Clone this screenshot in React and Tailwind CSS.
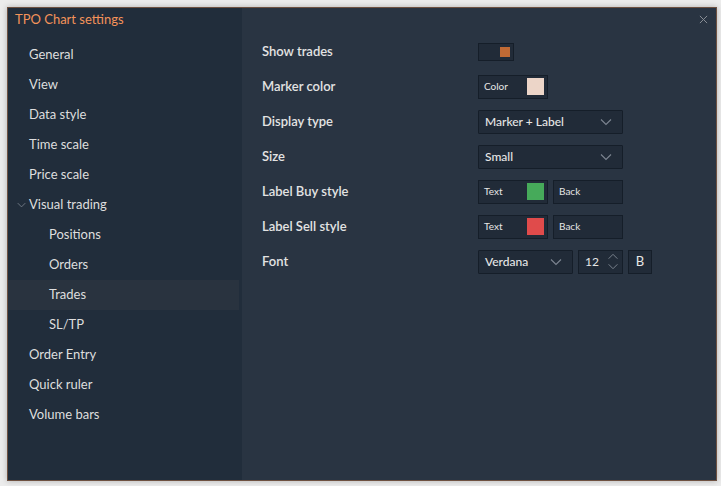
import React from 'react';

const navItems = [
  { label: 'General', level: 0 },
  { label: 'View', level: 0 },
  { label: 'Data style', level: 0 },
  { label: 'Time scale', level: 0 },
  { label: 'Price scale', level: 0 },
  { label: 'Visual trading', level: 0, open: true },
  { label: 'Positions', level: 1 },
  { label: 'Orders', level: 1 },
  { label: 'Trades', level: 1, active: true },
  { label: 'SL/TP', level: 1 },
  { label: 'Order Entry', level: 0 },
  { label: 'Quick ruler', level: 0 },
  { label: 'Volume bars', level: 0 },
];

function Chevron({ className }) {
  return (
    <svg className={className} viewBox="0 0 12 8" fill="none" stroke="currentColor" strokeWidth="1.1">
      <path d="M1 1.5l5 5 5-5" />
    </svg>
  );
}

function Select({ value, width }) {
  return (
    <div className={`${width} h-[24px] flex items-center justify-between pl-[6px] pr-[10px] bg-[#212b38] border border-[#151e29] rounded-[1px] text-[12px] font-medium text-[#e6e6e6]`}>
      <span>{value}</span>
      <Chevron className="w-[12px] h-[8px] text-[#7d8591]" />
    </div>
  );
}

function ColorBox({ label, swatch }) {
  return (
    <div className="w-[70px] h-[24px] flex items-center justify-between pl-[5px] pr-[3px] bg-[#212b38] border border-[#151e29] text-[10px] text-[#e6e6e6]">
      <span>{label}</span>
      {swatch && <span className={`w-[17px] h-[17px] ${swatch}`} />}
    </div>
  );
}

function Row({ label, children }) {
  return (
    <div className="flex items-center h-[35px]">
      <div className="w-[216px] text-[13px] font-semibold text-[#e3e3e3]">{label}</div>
      <div className="flex items-center gap-[5px]">{children}</div>
    </div>
  );
}

export default function App() {
  return (
    <div className="w-[721px] h-[486px] bg-[#ececec] p-[7px]" style={{ fontFamily: 'Lato, "Noto Sans", sans-serif' }}>
      <div className="relative w-[710px] h-[474px] flex border border-[#6e5141] shadow-[0_0_6px_rgba(0,0,0,0.25)]">
        {/* Sidebar */}
        <div className="w-[234px] bg-[#212d3b] flex flex-col">
          <div className="h-[21px] pl-[7px] flex items-end text-[13px] text-[#f4935a]">TPO Chart settings</div>
          <div className="mt-[11px] flex flex-col">
            {navItems.map((item) => (
              <div
                key={item.label}
                className={`relative h-[30px] w-[231px] flex items-center text-[13px] text-[#dedede] ${item.active ? 'bg-[#29333f]' : ''} ${item.level === 1 ? 'pl-[41px]' : 'pl-[21px]'}`}
              >
                {item.open && (
                  <Chevron className="absolute left-[9px] top-[12px] w-[9px] h-[6px] text-[#7d8591]" />
                )}
                {item.label}
              </div>
            ))}
          </div>
        </div>

        {/* Main panel */}
        <div className="flex-1 bg-[#293442] pl-[20px] pt-[26px]">
          <Row label="Show trades">
            <div className="w-[36px] h-[18px] bg-[#212b38] border border-[#151e29] flex items-center justify-end pr-[3px]">
              <span className="w-[10px] h-[10px] bg-[#c06a35]" />
            </div>
          </Row>
          <Row label="Marker color">
            <ColorBox label="Color" swatch="bg-[#ecd5c8]" />
          </Row>
          <Row label="Display type">
            <Select value="Marker + Label" width="w-[145px]" />
          </Row>
          <Row label="Size">
            <Select value="Small" width="w-[145px]" />
          </Row>
          <Row label="Label Buy style">
            <ColorBox label="Text" swatch="bg-[#46aa5a]" />
            <ColorBox label="Back" />
          </Row>
          <Row label="Label Sell style">
            <ColorBox label="Text" swatch="bg-[#e04b4b]" />
            <ColorBox label="Back" />
          </Row>
          <Row label="Font">
            <Select value="Verdana" width="w-[95px]" />
            <div className="w-[45px] h-[24px] flex items-center justify-between pl-[6px] pr-[3px] bg-[#212b38] border border-[#151e29] text-[12px] text-[#e6e6e6]">
              <span>12</span>
              <div className="flex flex-col gap-[3px]">
                <Chevron className="w-[12px] h-[7px] rotate-180 text-[#7d8591]" />
                <Chevron className="w-[12px] h-[7px] text-[#7d8591]" />
              </div>
            </div>
            <div className="w-[24px] h-[24px] flex items-center justify-center bg-[#212b38] border border-[#151e29] text-[13px] text-[#e6e6e6]">B</div>
          </Row>
        </div>

        <svg className="absolute right-[8px] top-[7px] w-[9px] h-[9px] text-[#8a8f96]" viewBox="0 0 10 10" stroke="currentColor" strokeWidth="1.1">
          <path d="M1 1l8 8M9 1l-8 8" />
        </svg>
      </div>
    </div>
  );
}
